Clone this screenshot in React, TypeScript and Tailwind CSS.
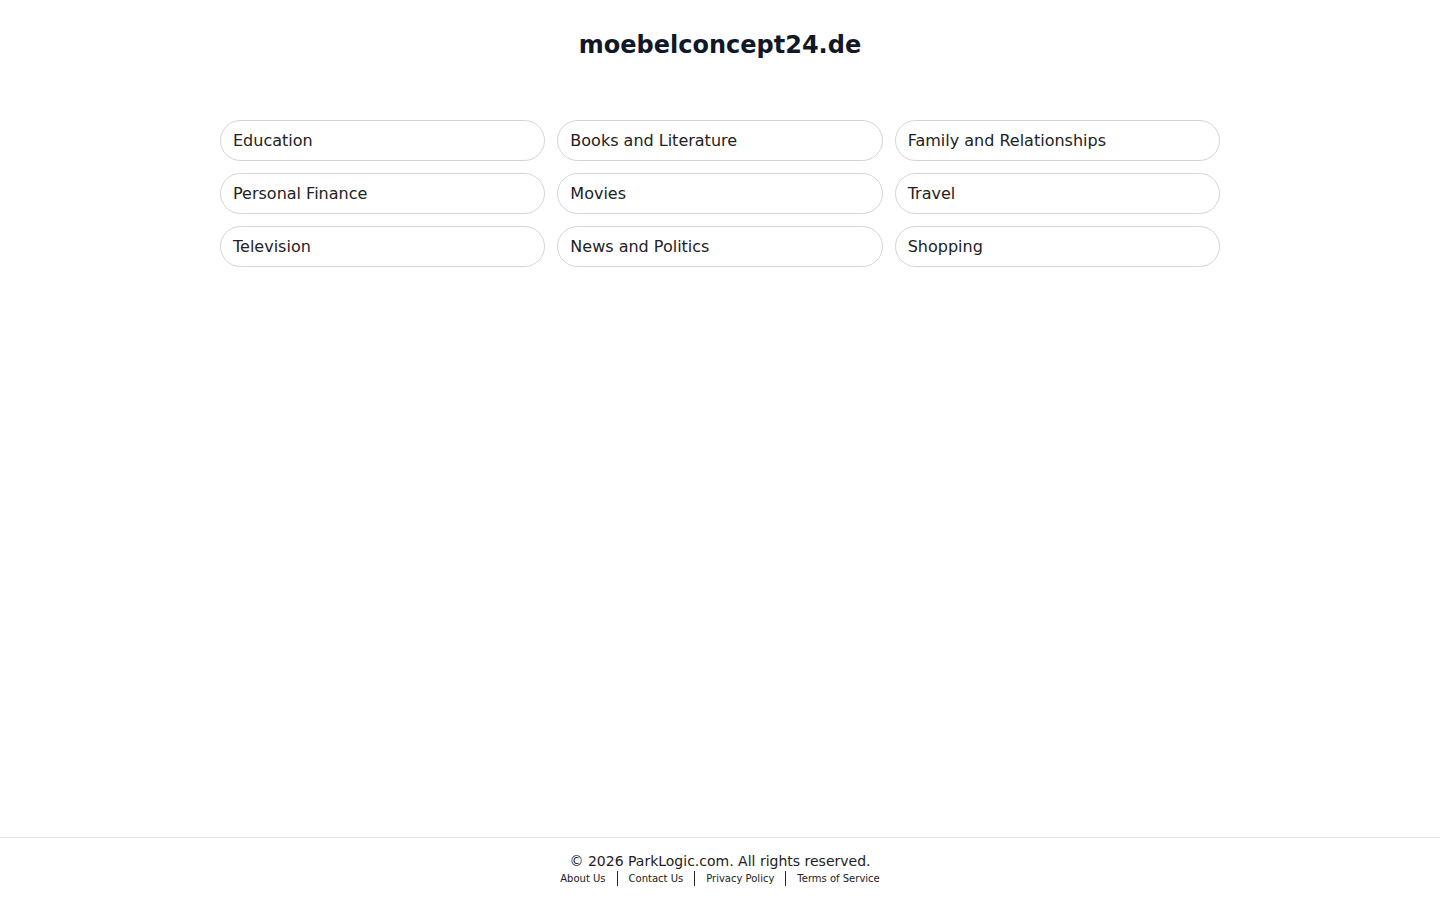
import React from 'react';

const categories = [
  'Education',
  'Books and Literature',
  'Family and Relationships',
  'Personal Finance',
  'Movies',
  'Travel',
  'Television',
  'News and Politics',
  'Shopping',
];

const links = ['About Us', 'Contact Us', 'Privacy Policy', 'Terms of Service'];

export default function App() {
  return (
    <div className="min-h-screen flex flex-col bg-white text-[#111827] font-['DejaVu_Sans',sans-serif]">
      <main className="flex-1">
        <h1 className="pt-[29px] text-center text-[24px] font-bold leading-[32px] text-[#111827]">
          moebelconcept24.de
        </h1>

        <div className="mx-auto mt-[59px] grid w-[1000px] grid-cols-3 gap-x-[12px] gap-y-[12px]">
          {categories.map((c) => (
            <a
              key={c}
              href="#"
              className="flex h-[41px] items-center rounded-full border border-[#d4d4d8] px-[12px] text-[16px] text-[#222222]"
            >
              {c}
            </a>
          ))}
        </div>
      </main>

      {/* Footer */}
      <footer className="h-[63px] border-t border-[#e5e7eb] pt-[14px] text-center">
        <p className="text-[14px] leading-[18px] text-[#222222]">© 2026 ParkLogic.com. All rights reserved.</p>
        <div className="mt-[1px] flex items-center justify-center text-[10px] leading-[14px] text-[#222222]">
          {links.map((l, i) => (
            <React.Fragment key={l}>
              {i > 0 && <span className="mx-[11px] h-[15px] w-px bg-[#222222]" />}
              <a href="#">{l}</a>
            </React.Fragment>
          ))}
        </div>
      </footer>
    </div>
  );
}
